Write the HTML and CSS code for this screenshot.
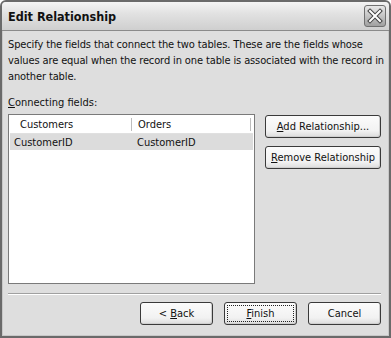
FILE: index.html
```html
<!DOCTYPE html>
<html lang="en">
<head>
  <meta charset="UTF-8" />
  <title>Edit Relationship</title>
  <link rel="stylesheet" href="styles.css">
</head>
<body>
  <div class="window">
    <div class="titlebar">
      <span class="title">Edit Relationship</span>
      <button class="close" aria-label="Close">
        <svg width="16" height="16" viewBox="0 0 16 16">
          <path d="M3 3 L13 13 M13 3 L3 13" stroke="#444" stroke-width="4" stroke-linecap="square"/>
          <path d="M3 3 L13 13 M13 3 L3 13" stroke="#fff" stroke-width="2" stroke-linecap="square"/>
        </svg>
      </button>
    </div>
    <div class="body">
      <p class="intro">Specify the fields that connect the two tables. These are the fields whose values are equal when the record in one table is associated with the record in another table.</p>
      <div class="label"><u>C</u>onnecting fields:</div>
      <div class="main">
        <div class="list">
          <div class="list-head">
            <div class="col c1">Customers</div>
            <div class="col c2">Orders</div>
          </div>
          <div class="row selected">
            <div class="cell c1">CustomerID</div>
            <div class="cell c2">CustomerID</div>
          </div>
        </div>
        <div class="side">
          <button class="btn wide"><u>A</u>dd Relationship...</button>
          <button class="btn wide"><u>R</u>emove Relationship</button>
        </div>
      </div>
      <div class="sep"></div>
      <div class="footer">
        <button class="btn">&lt; <u>B</u>ack</button>
        <button class="btn focus"><u>F</u>inish</button>
        <button class="btn">Cancel</button>
      </div>
    </div>
  </div>
</body>
</html>
```

FILE: styles.css
```css
html, body {
  margin: 0;
  background: #fff;
}
body {
  font-family: Tahoma, "DejaVu Sans Condensed", "Liberation Sans", sans-serif;
  font-size: 11px;
  color: #111;
}
.window {
  width: 387px;
  height: 334px;
  border: 2px solid #6a6a6a;
  border-radius: 6px 6px 0 0;
  background: #dedede;
  box-shadow: inset 0 0 0 1px #c8c8c8;
  display: flex;
  flex-direction: column;
}
.titlebar {
  height: 28px;
  background: linear-gradient(#f4f4f4, #e2e2e2 40%, #cfcfcf);
  border-radius: 4px 4px 0 0;
  display: flex;
  align-items: center;
  justify-content: space-between;
  padding: 0 3px 0 6px;
  border-bottom: 1px solid #8a8a8a;
}
.title {
  font-weight: bold;
  font-size: 12.5px;
  color: #111;
}
.close {
  width: 22px;
  height: 22px;
  padding: 0;
  border: 1px solid #707070;
  border-radius: 3px;
  background: linear-gradient(#e8e8e8, #a0a0a0);
  display: grid;
  place-items: center;
}
.body {
  flex: 1;
  padding: 6px 8px 0 6px;
  display: flex;
  flex-direction: column;
}
.intro {
  margin: 0;
  line-height: 16px;
  letter-spacing: -0.12px;
  margin-right: -3px;
}
.label {
  margin-top: 11px;
  line-height: 14px;
}
.main {
  display: flex;
  gap: 10px;
  margin-top: 4px;
}
.list {
  width: 247px;
  height: 170px;
  background: #fff;
  border: 1px solid #7a7a7a;
  padding: 1px;
  box-sizing: border-box;
}
.list-head {
  display: flex;
  height: 17px;
  border-bottom: 1px solid #e0e0e0;
  align-items: center;
}
.col {
  padding-left: 10px;
}
.col.c1 {
  width: 111px;
  border-right: 1px solid #bdbdbd;
  height: 13px;
  line-height: 13px;
}
.col.c2 {
  padding-left: 6px;
  border-right: 1px solid #bdbdbd;
  flex: 1;
  height: 13px;
  line-height: 13px;
  margin-right: 2px;
}
.row {
  display: flex;
  height: 16px;
  align-items: center;
}
.row.selected {
  background: #dcdcdc;
}
.cell.c1 {
  width: 117px;
  padding-left: 4px;
}
.cell.c2 {
  padding-left: 6px;
}
.side {
  display: flex;
  flex-direction: column;
  gap: 8px;
  margin-top: 1px;
}
.btn {
  font-family: inherit;
  font-size: 11px;
  color: #111;
  width: 73px;
  height: 23px;
  padding: 0;
  border: 1px solid #3a3a3a;
  border-radius: 3px;
  background: linear-gradient(#fbfbfb, #f2f2f2 70%, #dcdcdc);
  box-shadow: inset -1px -1px 0 #cfcfcf;
  white-space: nowrap;
}
.btn.wide {
  width: 116px;
}
.btn.focus {
  outline: 1px dotted #222;
  outline-offset: -4px;
}
.sep {
  margin-top: 9px;
  height: 0;
  border-top: 1px solid #a0a0a0;
  border-bottom: 1px solid #fff;
}
.footer {
  display: flex;
  justify-content: flex-end;
  gap: 11px;
  padding-top: 7px;
}
```
